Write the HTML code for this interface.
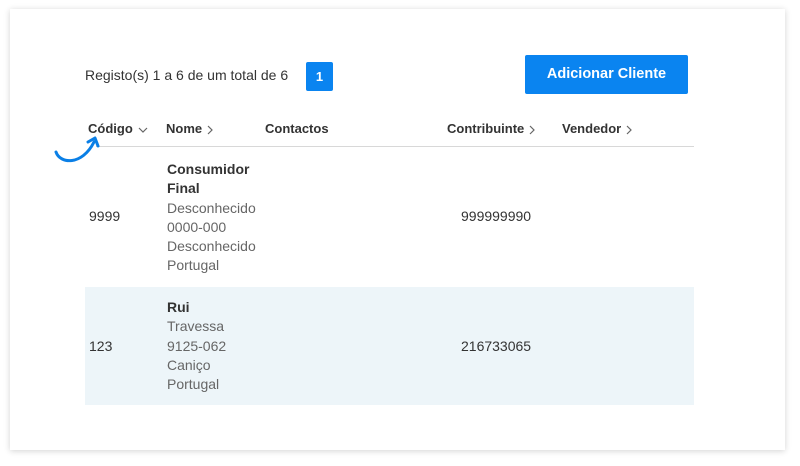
<!DOCTYPE html>
<html><head><meta charset="utf-8"><style>
body{margin:0;width:800px;height:466px;background:#fff;font-family:"Liberation Sans",sans-serif;position:relative;overflow:hidden;color:#333}
.card{position:absolute;left:10px;top:9px;width:775px;height:441px;background:#fff;box-shadow:0 1px 6px rgba(0,0,0,.18)}
.a{position:absolute;white-space:nowrap}
.h{font-weight:bold;font-size:13px;color:#333;top:121px}
.c{font-size:14px;color:#333}
.g{color:#666}
.chev{display:inline-block;vertical-align:middle;margin-left:5px}
</style></head><body>
<div class="card"></div>
<div class="a c" style="left:85px;top:67px">Registo(s) 1 a 6 de um total de 6</div>
<div class="a" style="left:306px;top:62px;width:27px;height:29px;background:#0a84f0;border-radius:2px;color:#fff;font-size:13px;font-weight:bold;text-align:center;line-height:29px">1</div>
<div class="a" style="left:525px;top:55px;width:163px;height:39px;background:#0a84f0;border-radius:2px;color:#fff;font-size:14.5px;font-weight:bold;text-align:center;line-height:39px">Adicionar Cliente</div>
<div class="a h" style="left:88px">Código<svg class="chev" width="10" height="8"><path d="M1 2 L5 6 L9 2" fill="none" stroke="#666" stroke-width="1.2"/></svg></div>
<div class="a h" style="left:166px">Nome<svg class="chev" width="6" height="10"><path d="M1 1 L5 5 L1 9" fill="none" stroke="#666" stroke-width="1.2"/></svg></div>
<div class="a h" style="left:265px">Contactos</div>
<div class="a h" style="left:447px">Contribuinte<svg class="chev" width="6" height="10"><path d="M1 1 L5 5 L1 9" fill="none" stroke="#666" stroke-width="1.2"/></svg></div>
<div class="a h" style="left:562px">Vendedor<svg class="chev" width="6" height="10"><path d="M1 1 L5 5 L1 9" fill="none" stroke="#666" stroke-width="1.2"/></svg></div>
<div class="a" style="left:96px;top:146px;width:598px;height:1px;background:#d8d8d8"></div>
<svg class="a" style="left:52px;top:134px" width="50" height="34" viewBox="0 0 50 34"><path d="M4 18 C8 30 30 32 42 8" fill="none" stroke="#0a7fe6" stroke-width="3" stroke-linecap="round"/><path d="M36 8 L43 4 L46 12" fill="none" stroke="#0a7fe6" stroke-width="3" stroke-linecap="round" stroke-linejoin="round"/></svg>
<div class="a c" style="left:167px;top:160px;line-height:19.3px;white-space:normal;width:100px"><b>Consumidor Final</b><br><span class="g">Desconhecido<br>0000-000<br>Desconhecido<br>Portugal</span></div>
<div class="a c" style="left:89px;top:208px">9999</div>
<div class="a c" style="left:461px;top:208px">999999990</div>
<div class="a" style="left:85px;top:287px;width:609px;height:118px;background:#edf5f9"></div>
<div class="a c" style="left:167px;top:298px;line-height:19.3px"><b>Rui</b><br><span class="g">Travessa<br>9125-062<br>Caniço<br>Portugal</span></div>
<div class="a c" style="left:89px;top:338px">123</div>
<div class="a c" style="left:461px;top:338px">216733065</div>
</body></html>
